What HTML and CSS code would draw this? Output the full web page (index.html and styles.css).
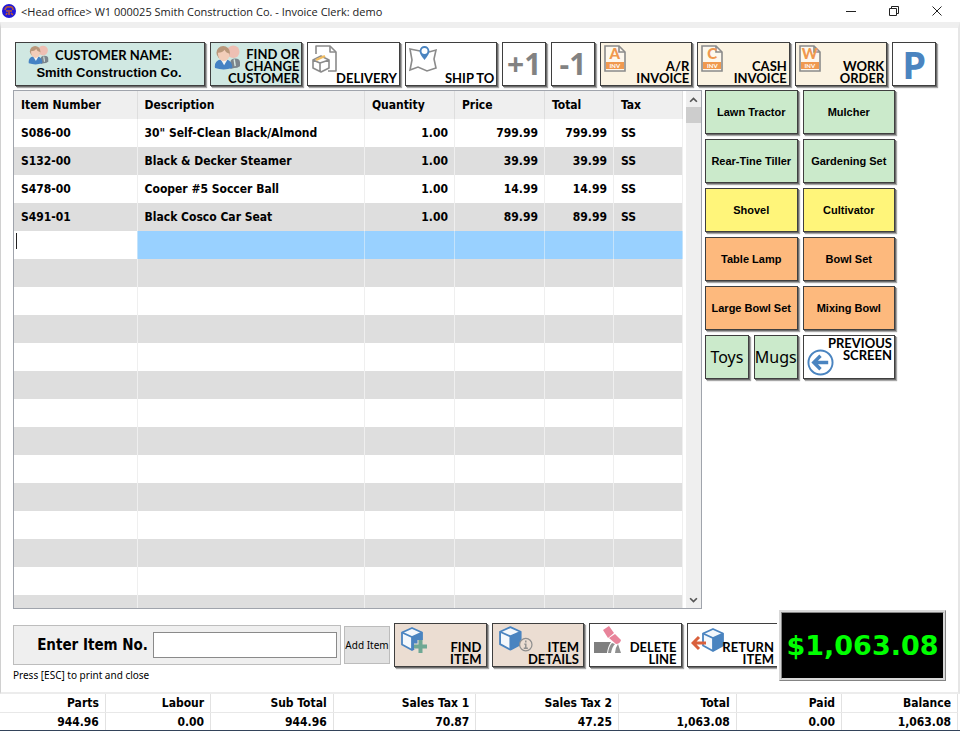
FILE: index.html
```html
<!DOCTYPE html>
<html lang="en">
<head>
    <meta charset="utf-8">
    <title>Invoice</title>
    <link rel="stylesheet" href="styles.css">
</head>
<body>
    <!-- shared icons -->
    <svg class="defs" width="0" height="0">
        <symbol id="people" viewBox="0 0 28 26">
            <circle cx="20" cy="7" r="6.5" fill="#eebfb3"/>
            <path d="M17 25v-7q0-4 5-4 5 0 5 4v4q-3 2-6 2z" fill="#7c858c"/>
            <path d="M21 15l1 7" stroke="#d7e8e3" stroke-width="1.5"/>
            <path d="M1 24q-1-8 6-9h6q6 1 6 9-9 3-18 0z" fill="#4582c4"/>
            <path d="M7 15l3.5 6 3.5-6z" fill="#f3f5f4"/>
            <circle cx="9.5" cy="8" r="7" fill="#b8977a"/>
            <path d="M4 8q5 0 7-3 1 3 5 4 0 7-6 8-6-1-6-9z" fill="#f2cdb9"/>
        </symbol>
        <symbol id="page" viewBox="0 0 22 27">
            <path d="M1 1h14l6 6v19H1z" fill="#fdf8ee" stroke="#8b8b8b" stroke-width="1.6"/>
            <path d="M15 1v6h6" fill="none" stroke="#8b8b8b" stroke-width="1.6"/>
            <path d="M2 17h18v7H2z" fill="#f0994f"/>
        </symbol>
        <symbol id="cube" viewBox="0 0 24 24">
            <path d="M12 1l10 4.5v12L12 23 2 17.500V5.500z" fill="#f4f8fc" stroke="#4a84c0" stroke-width="1.8" stroke-linejoin="round"/>
            <path d="M12 10l10-4.500v12L12 23z" fill="#4a84c0"/>
            <path d="M2 5.500L12 10l10-4.500M12 10v13" fill="none" stroke="#4a84c0" stroke-width="1.8"/>
        </symbol>
    </svg>

    <header class="titlebar">
        <svg class="app-icon" viewBox="0 0 14 14">
            <circle cx="7" cy="7" r="7" fill="#2018d8"/>
            <path d="M3 6q1-4 4-3 4-1 4 3M4 7h6M5 9l-1 2M7 8v3M9 9l2 2" fill="none" stroke="#b4583c" stroke-width="1.6"/>
        </svg>
        <h1>&lt;Head office&gt; W1 000025 Smith Construction Co. - Invoice Clerk: demo</h1>
        <div class="window-buttons">
            <button aria-label="Minimize"><svg viewBox="0 0 10 10"><path d="M0 5.500h10"/></svg></button>
            <button aria-label="Restore"><svg viewBox="0 0 10 10"><path d="M.5 2.500h7v7h-7zM2.500 2.500v-2h7v7h-2"/></svg></button>
            <button aria-label="Close"><svg viewBox="0 0 10 10"><path d="M.5.5l9 9M9.500.5l-9 9"/></svg></button>
        </div>
    </header>

    <main class="window">
        <div class="toolbar">
            <button class="tile teal customer">
                <svg class="icon-people-small"><use href="#people"/></svg>
                <span class="customer-label">CUSTOMER NAME:</span>
                <span class="customer-name">Smith Construction Co.</span>
            </button>
            <button class="tile wide teal">
                <svg class="icon icon-people"><use href="#people"/></svg>
                <span class="label">FIND OR<br>CHANGE<br>CUSTOMER</span>
            </button>
            <button class="tile wide">
                <svg class="icon icon-delivery" viewBox="0 0 27 28" fill="none" stroke="#8b8b8b" stroke-width="1.6" stroke-linejoin="round">
                    <path d="M5 9V1h14l6 6v19H17"/>
                    <path d="M19 1v6h6"/>
                    <path d="M10 11l8 4v8l-8 4-8-4v-8zM2 15l7 3 9-3M9 18v9" fill="#fff"/>
                    <path d="M5 15l9-4" stroke="#f0bc62" stroke-width="2.400"/>
                </svg>
                <span class="label">DELIVERY</span>
            </button>
            <button class="tile wide">
                <svg class="icon icon-map" viewBox="0 0 28 28" fill="none" stroke="#8b8b8b" stroke-width="1.600">
                    <path d="M11 6L1 4l2 11-2 10 8-3 9 4 9-3-2-9 2-9-7 2"/>
                    <path d="M15.500 15q-5-6-5-9 1-5 5-5 4 0 5 5 0 3-5 9z" fill="#4a84c0" stroke="none"/>
                    <circle cx="15.500" cy="6" r="3" fill="#fff" stroke="none"/>
                </svg>
                <span class="label">SHIP TO</span>
            </button>
            <button class="tile step">+1</button>
            <button class="tile step">-1</button>
            <button class="tile wide cream">
                <span class="icon invoice-icon"><svg><use href="#page"/></svg><b>A</b><i>INV</i></span>
                <span class="label">A/R<br>INVOICE</span>
            </button>
            <button class="tile wide cream">
                <span class="icon invoice-icon"><svg><use href="#page"/></svg><b>C</b><i>INV</i></span>
                <span class="label">CASH<br>INVOICE</span>
            </button>
            <button class="tile wide cream">
                <span class="icon invoice-icon"><svg><use href="#page"/></svg><b>W</b><i>INV</i></span>
                <span class="label">WORK<br>ORDER</span>
            </button>
            <button class="tile park">P</button>
        </div>

        <div class="middle">
            <div class="grid-box">
                <div class="grid-scroll">
                    <table class="items">
                        <colgroup>
                            <col class="col-item"><col class="col-desc"><col class="col-qty"><col class="col-price"><col class="col-total"><col class="col-tax">
                        </colgroup>
                        <thead>
                            <tr><th>Item Number</th><th>Description</th><th>Quantity</th><th>Price</th><th>Total</th><th>Tax</th></tr>
                        </thead>
                        <tbody>
                            <tr><td>S086-00</td><td>30" Self-Clean Black/Almond</td><td class="num">1.00</td><td class="num">799.99</td><td class="num">799.99</td><td>SS</td></tr>
                            <tr><td>S132-00</td><td>Black &amp; Decker Steamer</td><td class="num">1.00</td><td class="num">39.99</td><td class="num">39.99</td><td>SS</td></tr>
                            <tr><td>S478-00</td><td>Cooper #5 Soccer Ball</td><td class="num">1.00</td><td class="num">14.99</td><td class="num">14.99</td><td>SS</td></tr>
                            <tr><td>S491-01</td><td>Black Cosco Car Seat</td><td class="num">1.00</td><td class="num">89.99</td><td class="num">89.99</td><td>SS</td></tr>
                            <tr class="current"><td><span class="caret"></span></td><td></td><td></td><td></td><td></td><td></td></tr>
                            <tr><td></td><td></td><td></td><td></td><td></td><td></td></tr>
                            <tr><td></td><td></td><td></td><td></td><td></td><td></td></tr>
                            <tr><td></td><td></td><td></td><td></td><td></td><td></td></tr>
                            <tr><td></td><td></td><td></td><td></td><td></td><td></td></tr>
                            <tr><td></td><td></td><td></td><td></td><td></td><td></td></tr>
                            <tr><td></td><td></td><td></td><td></td><td></td><td></td></tr>
                            <tr><td></td><td></td><td></td><td></td><td></td><td></td></tr>
                            <tr><td></td><td></td><td></td><td></td><td></td><td></td></tr>
                            <tr><td></td><td></td><td></td><td></td><td></td><td></td></tr>
                            <tr><td></td><td></td><td></td><td></td><td></td><td></td></tr>
                            <tr><td></td><td></td><td></td><td></td><td></td><td></td></tr>
                            <tr><td></td><td></td><td></td><td></td><td></td><td></td></tr>
                            <tr><td></td><td></td><td></td><td></td><td></td><td></td></tr>
                        </tbody>
                    </table>
                </div>
                <div class="scrollbar">
                    <button aria-label="Scroll up"><svg viewBox="0 0 8 6"><path d="M1 5l3-3 3 3"/></svg></button>
                    <div class="thumb"></div>
                    <button class="down" aria-label="Scroll down"><svg viewBox="0 0 8 6"><path d="M1 1l3 3 3-3"/></svg></button>
                </div>
            </div>

            <div class="quick">
                <button class="tile wide green">Lawn Tractor</button>
                <button class="tile wide green">Mulcher</button>
                <button class="tile wide green">Rear-Tine Tiller</button>
                <button class="tile wide green">Gardening Set</button>
                <button class="tile wide yellow">Shovel</button>
                <button class="tile wide yellow">Cultivator</button>
                <button class="tile wide orange">Table Lamp</button>
                <button class="tile wide orange">Bowl Set</button>
                <button class="tile wide orange">Large Bowl Set</button>
                <button class="tile wide orange">Mixing Bowl</button>
                <button class="tile green group">Toys</button>
                <button class="tile green group">Mugs</button>
                <button class="tile wide previous">
                    <svg class="icon icon-back" viewBox="0 0 28 28" fill="none" stroke="#4a84c0">
                        <circle cx="14" cy="14" r="12.500" stroke-width="2"/>
                        <path d="M22 14H7M14 7l-7 7 7 7" stroke-width="3.500"/>
                    </svg>
                    <span class="label">PREVIOUS<br>SCREEN</span>
                </button>
            </div>
        </div>

        <div class="bottom">
            <div class="actions">
                <div class="action-row">
                    <div class="entry">
                        <label for="item_no">Enter Item No.</label>
                        <input type="text" id="item_no" name="item_no">
                    </div>
                    <button class="add-item">Add Item</button>
                    <div class="action-tiles">
                        <button class="tile beige">
                            <svg class="icon icon-find" viewBox="0 0 28 26">
                                <use href="#cube" x="0" y="0" width="24" height="24"/>
                                <path d="M20.500 13v13M14 19.500h13" stroke="#ebddd2" stroke-width="6"/>
                                <path d="M20.500 13v13M14 19.500h13" stroke="#6fa894" stroke-width="4"/>
                            </svg>
                            <span class="label">FIND<br>ITEM</span>
                        </button>
                        <button class="tile beige">
                            <svg class="icon icon-details" viewBox="0 0 34 26">
                                <use href="#cube" x="0" y="0" width="24" height="24"/>
                                <circle cx="27" cy="18" r="6" fill="#ebddd2" stroke="#8f8f8f" stroke-width="1.200"/>
                                <path d="M27 14v2M25.500 17.500h1.500v4M25 21.500h4" fill="none" stroke="#8f8f8f" stroke-width="1.400"/>
                            </svg>
                            <span class="label">ITEM<br>DETAILS</span>
                        </button>
                        <button class="tile">
                            <svg class="icon icon-erase" viewBox="0 0 28 28">
                                <path d="M0 16h17q-3 4-4 11H0z" fill="#7f7f7f"/>
                                <path d="M14 27q1-7 4-10l3 1q-3 3-4 9zM21 27q0-5 3-9l3 9z" fill="#8f8f8f"/>
                                <path d="M9 4l6-4 5 7-6 5z" fill="#e8839a"/>
                                <path d="M15 12l6-4 6 6q-1 4-5 4z" fill="#e8839a"/>
                            </svg>
                            <span class="label">DELETE<br>LINE</span>
                        </button>
                        <button class="tile">
                            <svg class="icon icon-return" viewBox="0 0 34 26">
                                <use href="#cube" x="10" y="0" width="24" height="24"/>
                                <path d="M15 15H3M8 9l-6 6 6 6" fill="none" stroke="#d9603c" stroke-width="3"/>
                            </svg>
                            <span class="label">RETURN<br>ITEM</span>
                        </button>
                    </div>
                </div>
                <p class="hint">Press [ESC] to print and close</p>
            </div>
            <output class="grand-total">$1,063.08</output>
        </div>
    </main>

    <table class="summary">
        <colgroup>
            <col class="sum-parts"><col class="sum-labour"><col class="sum-sub"><col class="sum-tax"><col class="sum-tax"><col class="sum-total"><col class="sum-paid"><col class="sum-balance">
        </colgroup>
        <thead>
            <tr><th>Parts</th><th>Labour</th><th>Sub Total</th><th>Sales Tax 1</th><th>Sales Tax 2</th><th>Total</th><th>Paid</th><th>Balance</th></tr>
        </thead>
        <tbody>
            <tr><td>944.96</td><td>0.00</td><td>944.96</td><td>70.87</td><td>47.25</td><td>1,063.08</td><td>0.00</td><td>1,063.08</td></tr>
        </tbody>
    </table>
</body>
</html>
```
FILE: styles.css
```css
* {
    box-sizing: border-box;
}

body {
    margin: 0;
    min-height: 100vh;
    display: flex;
    flex-direction: column;
    background-color: #fff;
    border-bottom: 1px solid #33435a;
    font-family: "DejaVu Sans Condensed", "DejaVu Sans", sans-serif;
    font-size: 12px;
    color: #000;
}

button {
    font-family: inherit;
    color: inherit;
    padding: 0;
    cursor: pointer;
}

.defs {
    position: absolute;
}

/* title bar */
.titlebar {
    display: flex;
    align-items: center;
    height: 22px;
    padding: 0 2px;
}

.app-icon {
    width: 14px;
    height: 14px;
}

.titlebar h1 {
    flex: 1;
    margin: 0 0 0 5px;
    font: 11px "Open Sans", "Noto Sans", sans-serif;
    color: #222;
}

.window-buttons {
    display: flex;
}

.window-buttons button {
    width: 43px;
    height: 22px;
    border: none;
    background: none;
}

.window-buttons svg {
    width: 10px;
    height: 10px;
    fill: none;
    stroke: #222;
}

/* main window */
.window {
    flex: 1;
    display: flex;
    flex-direction: column;
    border-top: 6px solid #efefef;
    border-left: 1px solid #d0d0d0;
    border-right: 2px solid #e6e6e6;
    border-bottom: 2px solid #ececec;
    padding: 14px 0 10px;
}

.tile {
    position: relative;
    height: 44px;
    background-color: #fff;
    border: 1px solid #3f3f3f;
    box-shadow: 1px 1px 0 #6c6c6c, 2px 2px 1px #a8a8a8;
    font-family: "Liberation Sans", Arial, sans-serif;
    font-size: 11px;
    font-weight: bold;
}

.wide { grid-column: span 2; }
.teal { background-color: #d0e8e2; }
.cream { background-color: #fbf3e2; }
.green { background-color: #cbeacb; }
.yellow { background-color: #fff57a; }
.orange { background-color: #fdb97d; }
.beige { background-color: #ebddd2; }

/* caption and picture sit in opposite corners of the tile */
.label {
    position: absolute;
    right: 2px;
    bottom: 1px;
    font-family: Lato, "Open Sans", sans-serif;
    font-size: 13px;
    line-height: 12px;
    text-align: right;
}

.icon {
    position: absolute;
    left: 3px;
    top: 2px;
}

.icon-people { width: 27px; height: 25px; }
.icon-delivery { width: 27px; height: 28px; }
.icon-map { width: 28px; height: 28px; }
.icon-find { width: 28px; height: 28px; left: 5px; }
.icon-details { width: 35px; height: 27px; left: 5px; }
.icon-erase { width: 28px; height: 28px; left: 4px; }
.icon-return { width: 34px; height: 26px; top: 4px; }

.toolbar {
    display: grid;
    grid-template-columns: repeat(19, minmax(0, 1fr));
    gap: 5px;
    padding: 0 22px 0 14px;
}

.customer {
    grid-column: span 4;
    display: flex;
    flex-wrap: wrap;
    justify-content: center;
    align-content: center;
    align-items: center;
    gap: 0 6px;
}

.icon-people-small {
    width: 21px;
    height: 20px;
}

.customer-label {
    margin-right: 20px;
    font-family: Lato, "Open Sans", sans-serif;
    font-size: 13px;
}

.customer-name {
    width: 100%;
    padding: 0 2px 4px 0;
    font-size: 13px;
    line-height: 15px;
}

.step {
    font-family: "Open Sans", sans-serif;
    font-size: 30px;
    line-height: 40px;
    color: #828282;
}

.park {
    font-family: "Open Sans", sans-serif;
    font-size: 38px;
    line-height: 38px;
    color: #4a84c0;
}

.invoice-icon {
    display: flex;
    flex-direction: column;
    align-items: center;
    width: 22px;
    height: 27px;
    color: #f0994f;
    font-family: Lato, "Open Sans", sans-serif;
}

.invoice-icon svg {
    position: absolute;
    width: 22px;
    height: 27px;
}

.invoice-icon b {
    position: relative;
    font-size: 15px;
    font-weight: 900;
    line-height: 17px;
}

.invoice-icon i {
    position: relative;
    font-size: 6px;
    line-height: 7px;
    font-style: normal;
    color: #fff;
}

/* item grid */
.middle {
    flex: 1;
    display: flex;
    gap: 3px;
    margin-top: 4px;
    padding: 0 63px 0 12px;
}

.grid-box {
    flex: 1;
    display: flex;
    gap: 3px;
    border: 1px solid #a0a4ac;
}

.grid-scroll {
    position: relative;
    flex: 1;
    height: 517px;
    overflow: hidden;
}

.items {
    width: 100%;
    table-layout: fixed;
    border-collapse: collapse;
    font-weight: bold;
}

.col-item { width: 123px; }
.col-desc { width: 34%; }
.col-qty, .col-price { width: 90px; }
.col-total, .col-tax { width: 69px; }

.items th,
.items td {
    height: 28px;
    padding: 0 7px;
    border-right: 1px solid #efefef;
    text-align: left;
    white-space: nowrap;
}

.items th {
    background-color: #efefef;
    border-right-color: #dedede;
}

.items td.num {
    text-align: right;
    padding-right: 6px;
}

.items tbody tr:nth-child(even) {
    background-color: #dedede;
}

.items .current td {
    background-color: #99d1ff;
    border-right-color: #c4e3fb;
}

.items .current td:first-child {
    background-color: #fff;
    padding-left: 2px;
}

.caret {
    display: block;
    width: 1px;
    height: 16px;
    margin-bottom: 8px;
    background-color: #222;
}

.scrollbar {
    display: flex;
    flex-direction: column;
    width: 15px;
    background-color: #efefef;
}

.scrollbar button {
    height: 16px;
    border: none;
    background: none;
    line-height: 8px;
}

.scrollbar svg {
    width: 9px;
    height: 7px;
    fill: none;
    stroke: #555;
    stroke-width: 1.5;
}

.thumb {
    height: 16px;
    background-color: #cdcdcd;
}

.scrollbar .down {
    margin-top: auto;
}

/* quick item buttons */
.quick {
    display: grid;
    grid-template-columns: repeat(4, minmax(0, 1fr));
    align-content: start;
    gap: 5px;
    width: 190px;
}

.group {
    font-family: "Noto Sans", sans-serif;
    font-size: 16px;
    font-weight: normal;
}

.previous .label {
    top: 1px;
    bottom: auto;
}

.icon-back {
    top: auto;
    bottom: 2px;
    width: 27px;
    height: 27px;
}

/* entry row and total */
.bottom {
    display: flex;
    gap: 2px;
    margin-top: 1px;
    padding: 0 12px;
}

.actions {
    flex: 1;
    min-width: 0;
    overflow: hidden;
    padding-top: 13px;
}

.action-row {
    display: flex;
    align-items: center;
    height: 44px;
}

.entry {
    flex: 0 0 328px;
    display: flex;
    align-items: center;
    justify-content: flex-end;
    gap: 5px;
    height: 40px;
    padding-right: 3px;
    background-color: #efefef;
    border: 1px solid #bdbdbd;
}

.entry label {
    font-size: 15px;
    font-weight: bold;
}

.entry input {
    width: 184px;
    height: 26px;
    border: 1px solid #8a8a8a;
    background-color: #fff;
}

.add-item {
    flex: 0 0 46px;
    height: 38px;
    margin: 0 4px 0 3px;
    border: 1px solid #bcbcbc;
    background-color: #e1e1e1;
    font-family: "Noto Sans", sans-serif;
    font-size: 10px;
    white-space: nowrap;
}

.action-tiles {
    flex: 0 0 385px;
    display: grid;
    grid-template-columns: repeat(4, minmax(0, 1fr));
    gap: 5px;
}

.action-tiles .label {
    right: 4px;
}

.hint {
    margin: 1px 0 0;
    font-family: "Noto Sans", sans-serif;
    font-size: 10px;
    line-height: 14px;
}

.grand-total {
    width: 167px;
    height: 71px;
    border: 3px ridge #d8d8d8;
    background-color: #000;
    color: #0f0;
    font-family: "DejaVu Sans", sans-serif;
    font-size: 27px;
    font-weight: bold;
    line-height: 66px;
    text-align: center;
}

/* summary strip */
.summary {
    width: calc(100% - 2px);
    table-layout: fixed;
    border-collapse: collapse;
    font-weight: bold;
}

.sum-parts, .sum-labour, .sum-paid { width: 11%; }
.sum-sub { width: 12.8%; }
.sum-tax { width: 14.9%; }
.sum-total { width: 12.3%; }
.sum-balance { width: 12.1%; }

.summary th,
.summary td {
    height: 18px;
    padding: 1px 6px 0;
    border-right: 1px solid #e2e2e2;
    border-bottom: 1px solid #e8e8e8;
    text-align: right;
    line-height: 16px;
}

.summary td {
    border-bottom: none;
}
```
